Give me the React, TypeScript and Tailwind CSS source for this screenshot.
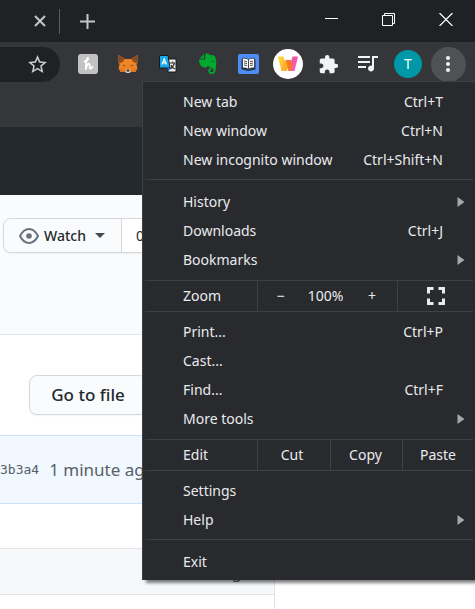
import type { ReactNode } from "react";

function Honey() {
  return (
    <svg width="22" height="22" viewBox="0 0 22 22" fill="none">
      <rect x="1" y="1" width="20" height="20" rx="3" fill="#c2c2c2" />
      <path d="M7.500 8.500C9 8 11.500 6.500 11 5C10 4.500 9 8 8.800 16C9.500 12.500 11 10.500 12.300 10.800C13.600 11.500 11.800 15.500 13.300 15.600C14.300 15.600 15 14.800 15.500 13.800" stroke="#fff" strokeWidth="1.900" strokeLinecap="round" strokeLinejoin="round" />
    </svg>
  );
}

function Fox() {
  return (
    <svg width="20" height="20" viewBox="0 0 20 20">
      <path d="M0.500 1L7 5H13L19.500 1L20 7L18.500 11L19.500 14L17.500 18L13.500 17.500L11.500 19H8.500L6.500 17.500L2.500 18L0.500 14L1.500 11L0 7Z" fill="#f08423" />
      <path d="M0.500 1L7 4.500L4.500 8L0.800 9.500L0 6ZM19.500 1L13 4.500L15.500 8L19.200 9.500L20 6Z" fill="#8a4c22" />
      <path d="M5 10.500L8 12.300L5.500 12.300ZM15 10.500L12 12.300L14.500 12.300Z" fill="#6d4a32" />
      <path d="M1 14.500L6 14L6.500 17.500L2.500 18ZM19 14.500L14 14L13.500 17.500L17.500 18Z" fill="#e9781f" />
      <path d="M7 16.500L8.500 15.500H11.500L13 16.500L12.300 18.300L11.500 19H8.500L7.700 18.300Z" fill="#d5c8bd" />
      <path d="M8.500 15.800H11.500L11.200 17.500H8.800Z" fill="#2b2421" />
    </svg>
  );
}

function Translate() {
  return (
    <svg width="20" height="20" viewBox="0 0 20 20">
      <path d="M8 5H18V18H10Z" fill="#f1f1f1" stroke="#17191c" />
      <path d="M11.500 9H17M14.500 7.500V9M16.500 9C15.500 12 14 14 12 15M13 11C13.500 12.500 15 14 17 15" stroke="#333" strokeWidth="1.100" fill="none" />
      <path d="M1.500 1.500H10L12 14H1.500Z" fill="#18a9ed" stroke="#17191c" />
      <path d="M9 14H12.500L10.500 17.500Z" fill="#0b66cf" />
      <path d="M4 10.500L6.200 4.800L8.400 10.500M4.800 8.800H7.600" stroke="#fff" strokeWidth="1.200" fill="none" />
    </svg>
  );
}

function Elephant() {
  return (
    <svg width="20" height="22" viewBox="0 0 20 22">
      <path d="M6 1V5.500H1.500ZM7.200 0.800C9.500 0 11.500 1 12 2C15 2 17 2.500 17.500 4.500C18.500 8 18.500 13 17.500 17C17 20.500 15.500 21 13.500 21C11 21 10.200 19.500 10.200 18C10.200 16 11.500 15.200 13.500 15.400V17.100C12.600 17 12 17.300 12 18C12 18.800 12.600 19.200 13.600 19.200C15.200 19.200 15.500 18.500 15.500 17.500C15.500 15.600 14.300 15 12.500 14.600C11 14.300 10.300 13.500 10 12.500C9.500 14 8.500 14.700 6.500 14.500C3.500 14.200 2.200 12.500 1.500 10C1 8.200 0.800 7 1.300 6.500H6.200C7 6.500 7.200 6.200 7.200 5.500Z" fill="#00a82d" />
      <path d="M13.400 8.800C13.600 7.600 15.700 7.600 16 9.200C15.200 8.900 14.200 8.700 13.400 8.800Z" fill="#35363a" />
    </svg>
  );
}

function Book() {
  return (
    <svg width="21" height="20" viewBox="0 0 21 20">
      <rect width="21" height="20" rx="2" fill="#4e8df5" />
      <path d="M3.500 5.500L10.500 7L17.500 5.500V15.500L10.500 17L3.500 15.500Z" fill="#26364d" />
      <path d="M4.500 4.500C7 4 9 4.500 10.500 5.500C12 4.500 14 4 16.500 4.500V14C14 13.700 12 14 10.500 15.500C9 14 7 13.700 4.500 14Z" fill="#fff" stroke="#222b35" strokeWidth="0.800" />
      <path d="M10.500 5.500V15M6 7L9 7.500M6 9L9 9.500M6 11L9 11.500M15 7L12 7.500M15 9L12 9.500M15 11L12 11.500" stroke="#333" strokeWidth="0.900" />
    </svg>
  );
}

function Woven() {
  return (
    <svg width="30" height="30" viewBox="0 0 30 30">
      <defs>
        <linearGradient id="warm" x1="0" y1="0" x2="1" y2="1">
          <stop offset="0" stopColor="#ffe03a" />
          <stop offset="1" stopColor="#fda526" />
        </linearGradient>
        <linearGradient id="pink" x1="0" y1="0" x2="0" y2="1">
          <stop offset="0" stopColor="#fb4fa5" />
          <stop offset="1" stopColor="#f45cc4" />
        </linearGradient>
      </defs>
      <circle cx="15" cy="15" r="15" fill="#fff" />
      <path d="M19.500 7.500H25L21.500 22H15.500Z" fill="url(#pink)" />
      <path d="M5 7.500H10.500L14 22H8.500Z" fill="url(#warm)" />
      <path d="M12 11H17.500L14 22H8.500Z" fill="#fdb02a" />
      <path d="M13 11H18L20 16L18 22H15.500Z" fill="#f9752f" />
    </svg>
  );
}

function Puzzle() {
  return (
    <svg width="21" height="21" viewBox="0 0 24 24" fill="#f1f3f4">
      <path d="M20.500 11H19V7c0-1.100-.9-2-2-2h-4V3.500a2.500 2.500 0 0 0-5 0V5H4c-1.100 0-1.990.9-1.990 2v3.800H3.500c1.490 0 2.700 1.210 2.700 2.700s-1.210 2.700-2.700 2.700H2V20c0 1.100.9 2 2 2h3.800v-1.500c0-1.490 1.210-2.700 2.700-2.700s2.700 1.210 2.700 2.700V22H17c1.100 0 2-.9 2-2v-4h1.500a2.500 2.500 0 0 0 0-5z" />
    </svg>
  );
}

function Queue() {
  return (
    <svg width="20" height="16" viewBox="0 0 20 16" fill="#f1f3f4">
      <path d="M0 0H12V2H0ZM0 5H12V7H0ZM0 10H8V12H0ZM14 0H20V2H16V12.500A3 3 0 1 1 14 9.700Z" />
    </svg>
  );
}

function Tool({ label, children }: { label: string; children: ReactNode }) {
  return (
    <button aria-label={label} className="flex h-full w-10 shrink-0 items-center justify-center">
      {children}
    </button>
  );
}

function Item({ label, keys, more }: { label: string; keys?: string; more?: boolean }) {
  return (
    <button role="menuitem" className="flex h-[29px] w-full items-center pl-10 pr-[10px] text-left">
      <span className="grow">{label}</span>
      {keys && <span className="pr-[22px]">{keys}</span>}
      {more && (
        <svg width="8" height="10" viewBox="0 0 8 10" fill="#a6a7aa">
          <path d="M0.500 0L7.500 5L0.500 10Z" />
        </svg>
      )}
    </button>
  );
}

const rule = "mx-[2px] border-t border-[#3f4043]";
const split = "h-[30px] border-l border-[#3f4043]";

function Menu() {
  return (
    <div
      role="menu"
      className="absolute right-0 top-[81px] w-[333px] border-l border-t border-[#3f4043] bg-[#292a2d] pb-1 pt-[5px] text-sm text-[#e8eaed] shadow-[4px_3px_3px_rgba(0,0,0,0.5)]"
    >
      <Item label="New tab" keys="Ctrl+T" />
      <Item label="New window" keys="Ctrl+N" />
      <Item label="New incognito window" keys="Ctrl+Shift+N" />
      <div className={`${rule} mb-[7px] mt-[5px]`} />
      <Item label="History" more />
      <Item label="Downloads" keys="Ctrl+J" />
      <Item label="Bookmarks" more />
      <div className={`${rule} mt-[6px]`} />
      <div className="flex h-[30px] items-center pl-10">
        <span className="w-[74px]">Zoom</span>
        <div className={`${split} flex w-[140px] items-center`}>
          <button aria-label="Zoom out" className="w-[46px]">−</button>
          <span className="grow text-center">100%</span>
          <button aria-label="Zoom in" className="w-[50px]">+</button>
        </div>
        <button aria-label="Full screen" className={`${split} flex grow items-center justify-center pr-[2px]`}>
          <svg width="18" height="18" viewBox="0 0 18 18" fill="none" stroke="#e8eaed" strokeWidth="3">
            <path d="M1.500 6.500V1.500H6.500M11.500 1.500H16.500V6.500M16.500 11.500V16.500H11.500M6.500 16.500H1.500V11.500" />
          </svg>
        </button>
      </div>
      <div className={`${rule} mb-[5px]`} />
      <Item label="Print..." keys="Ctrl+P" />
      <Item label="Cast..." />
      <Item label="Find..." keys="Ctrl+F" />
      <Item label="More tools" more />
      <div className={`${rule} mt-[6px]`} />
      <div className="flex h-[30px] items-center pl-10">
        <span className="w-[74px]">Edit</span>
        <button className={`${split} w-[73px] pr-1`}>Cut</button>
        <button className={`${split} w-[72px] pr-[2px]`}>Copy</button>
        <button className={`${split} grow pr-[2px]`}>Paste</button>
      </div>
      <div className={`${rule} mb-[5px]`} />
      <Item label="Settings" />
      <Item label="Help" more />
      <div className={`${rule} mb-[7px] mt-[5px]`} />
      <Item label="Exit" />
    </div>
  );
}

export default function App() {
  return (
    <div className="relative flex h-screen flex-col overflow-hidden bg-white font-['Noto_Sans','Open_Sans',sans-serif] text-[#24292e]">
      <header className="shrink-0">
        <div className="flex h-[42px] items-center justify-between bg-[#202124]">
          <div className="flex items-center pl-[34px]">
            <button aria-label="Close tab">
              <svg width="12" height="12" viewBox="0 0 12 12" stroke="#c4c6c9" strokeWidth="2">
                <path d="M1 1L11 11M11 1L1 11" />
              </svg>
            </button>
            <span className="ml-[13px] h-[25px] w-px bg-[#5b5c60]" />
            <button aria-label="New tab" className="ml-5">
              <svg width="15" height="15" viewBox="0 0 15 15" stroke="#c4c6c9" strokeWidth="2">
                <path d="M0 7.500H15M7.500 0V15" />
              </svg>
            </button>
          </div>
          <div className="flex h-9 items-center gap-[43px] pb-1 pr-[22px]">
            <button aria-label="Minimize">
              <svg width="14" height="13" viewBox="0 0 14 13" stroke="#fff"><path d="M0 5.500H13" /></svg>
            </button>
            <button aria-label="Restore">
              <svg width="14" height="13" viewBox="0 0 14 13" fill="none" stroke="#fff">
                <path d="M0.500 2.500H10.500V12.500H0.500ZM2.500 2.500V0.500H12.500V10.500H10.500" />
              </svg>
            </button>
            <button aria-label="Close">
              <svg width="14" height="13" viewBox="0 0 14 13" stroke="#fff" strokeWidth="1.200"><path d="M0.500 0L13.500 13M13.500 0L0.500 13" /></svg>
            </button>
          </div>
        </div>
        <div className="flex h-11 items-center justify-between bg-[#35363a] pr-[7px]">
          <div className="flex h-[35px] w-[60px] items-center justify-end rounded-r-full bg-[#202124] pr-[13px]">
            <button aria-label="Bookmark this tab">
              <svg width="19" height="19" viewBox="2 2 20 20" fill="#c9cbce">
                <path d="M22 9.240l-7.190-.62L12 2 9.190 8.630 2 9.240l5.460 4.730L5.820 21 12 17.270 18.180 21l-1.630-7.030L22 9.240zM12 15.400l-3.760 2.270 1-4.280-3.320-2.880 4.380-.38L12 6.100l1.710 4.040 4.380.38-3.320 2.880 1 4.280L12 15.400z" />
              </svg>
            </button>
          </div>
          <div className="flex h-full items-center">
            <Tool label="Honey"><Honey /></Tool>
            <Tool label="MetaMask"><Fox /></Tool>
            <Tool label="Translate"><Translate /></Tool>
            <Tool label="Evernote"><Elephant /></Tool>
            <Tool label="Dictionary"><Book /></Tool>
            <Tool label="Calendar"><Woven /></Tool>
            <Tool label="Extensions"><Puzzle /></Tool>
            <Tool label="Media controls"><Queue /></Tool>
            <Tool label="Profile">
              <span className="flex h-7 w-7 items-center justify-center rounded-full bg-[#0097a7] text-sm text-white">T</span>
            </Tool>
            <Tool label="Menu">
              <span className="flex h-[35px] w-[35px] shrink-0 items-center justify-center rounded-full bg-[#505155]">
                <svg width="4" height="16" viewBox="0 0 4 16" fill="#f1f3f4">
                  <circle cx="2" cy="2" r="2" /><circle cx="2" cy="8" r="2" /><circle cx="2" cy="14" r="2" />
                </svg>
              </span>
            </Tool>
          </div>
        </div>
        <div className="h-[41px] bg-[#35363a]" />
      </header>
      <main className="shrink-0">
        <div className="h-[68px] bg-[#24292e]" />
        <div className="h-[140px] border-b border-[#e1e4e8] bg-[#fafbfc] pl-[3px] pt-[23px]">
          <div className="flex h-[35px] w-[180px] overflow-hidden rounded-lg border border-[#d5d7da] bg-white text-sm font-medium shadow-xs">
            <button className="flex w-[118px] items-center border-r border-[#d5d7da] bg-[#fafbfc] pl-[15px]">
              <svg width="20" height="16" viewBox="0 0 20 16" fill="none" stroke="#6a737d" strokeWidth="2">
                <path d="M1 8C3 4 6 1 10 1S17 4 19 8C17 12 14 15 10 15S3 12 1 8Z" />
                <circle cx="10" cy="8" r="2.800" fill="#6a737d" stroke="none" />
              </svg>
              <span className="ml-[5px]">Watch</span>
              <svg className="ml-[9px]" width="10" height="5" viewBox="0 0 10 5" fill="#444a50"><path d="M0 0H10L5 5Z" /></svg>
            </button>
            <a href="#watchers" className="flex items-center pl-[14px] font-normal">0</a>
          </div>
        </div>
        <div className="pl-[29px] pt-10">
          <button className="h-10 w-[118px] rounded-lg border border-[#d5d7da] bg-[#fafbfc] text-[17px] font-medium shadow-xs">
            Go to file
          </button>
        </div>
        <div className="mt-5 w-[275px] border-r border-[#e1e4e8]">
          <div className="flex h-[69px] items-center whitespace-nowrap border-y border-[#c8e1ff] bg-[#f1f8ff] text-[#586069]">
            <a href="#commit" className="font-['DejaVu_Sans_Mono',monospace] text-[13px]">3b3a4</a>
            <span className="ml-[10px] text-[17px]">1 minute ago</span>
          </div>
          <div className="h-11" />
          <div className="flex h-[47px] items-center justify-end border-y border-[#e1e4e8] bg-[#f6f8fa] pr-8 text-[17px] text-[#586069]">g</div>
          <div className="h-[14px]" />
        </div>
      </main>
      <Menu />
    </div>
  );
}
